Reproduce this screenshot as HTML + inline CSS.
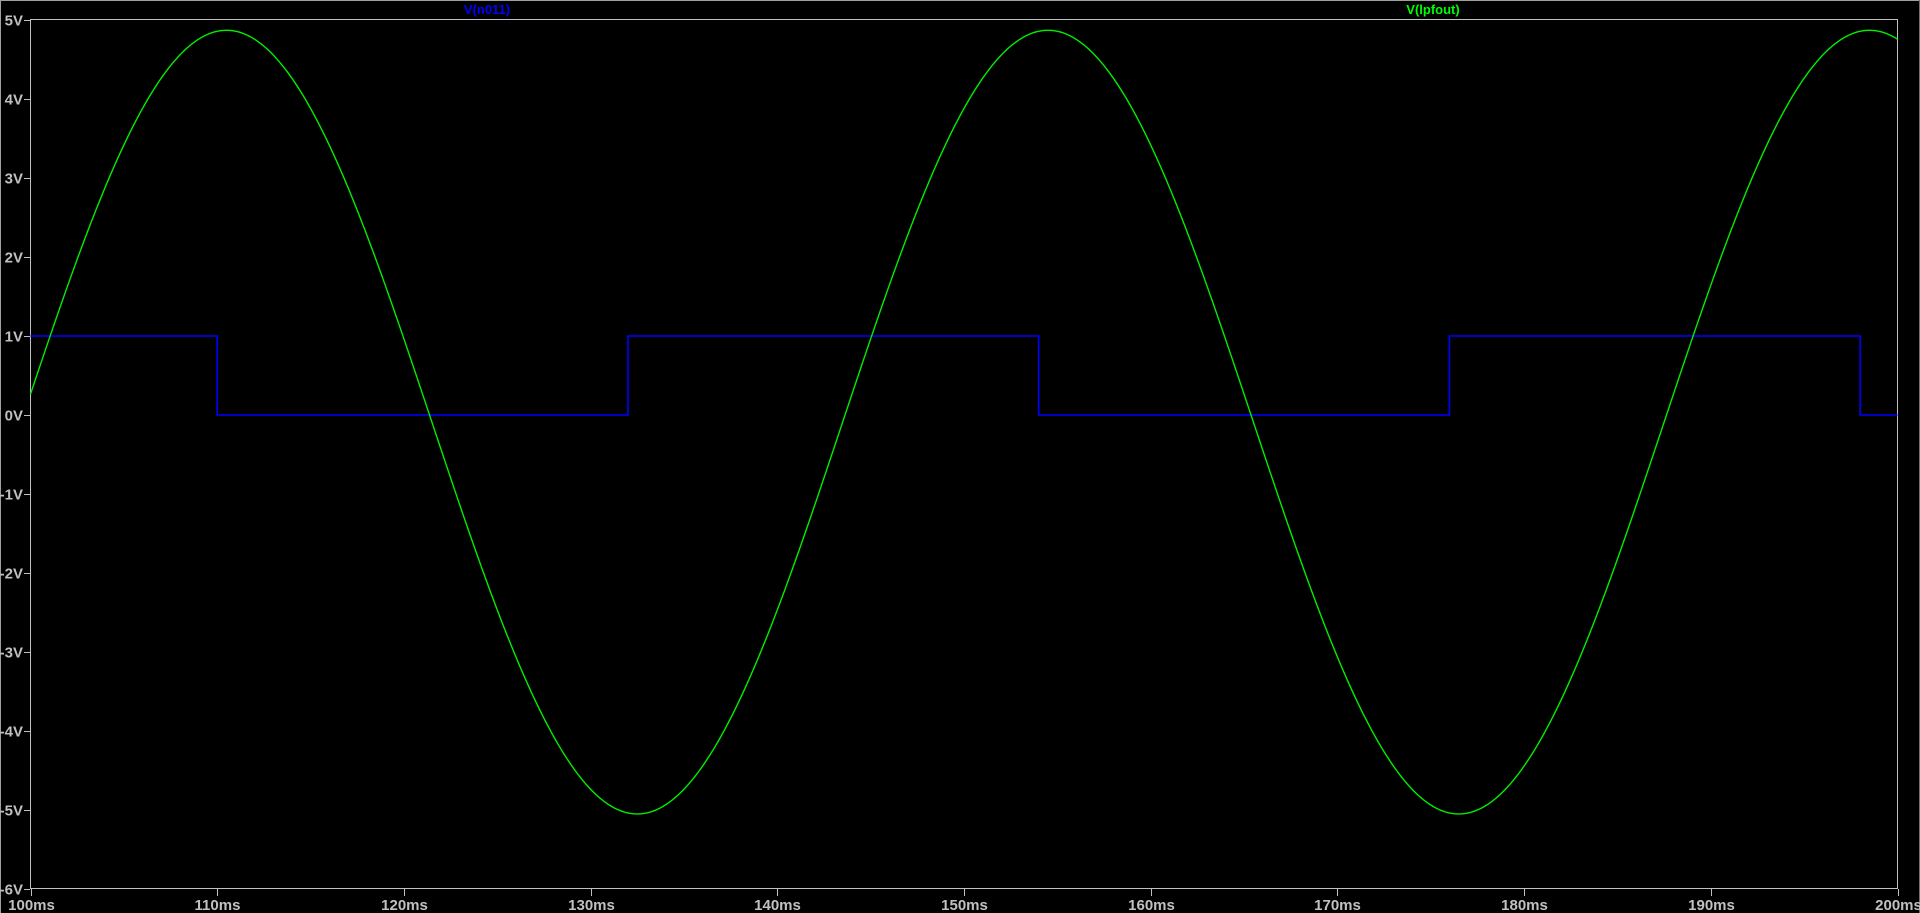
<!DOCTYPE html>
<html><head><meta charset="utf-8"><style>
html,body{margin:0;padding:0;background:#000;width:1920px;height:913px;overflow:hidden}
svg{display:block}
text{font-family:"Liberation Sans",Arial,sans-serif;font-weight:bold}
</style></head><body>
<svg id="s" width="1920" height="913" viewBox="0 0 1920 913">
<rect x="0" y="0" width="1920" height="913" fill="#000"/>
<line x1="0" y1="0.5" x2="1920" y2="0.5" stroke="#a0a0a0"/>
<line x1="0.5" y1="0" x2="0.5" y2="913" stroke="#a0a0a0"/>
<line x1="1919.5" y1="0" x2="1919.5" y2="913" stroke="#707070"/>
<rect x="30.5" y="19.5" width="1867" height="869" fill="none" stroke="#c0c0c0" stroke-width="1"/>
<g id="ticks" stroke="#c0c0c0"></g>
<g id="lbl" fill="#c0c0c0" font-size="15"></g>
<text x="487" y="14" fill="#0000ff" font-size="13" text-anchor="middle">V(n011)</text>
<text x="1433" y="14" fill="#00ff00" font-size="13" text-anchor="middle">V(lpfout)</text>
<path id="sq" fill="none" stroke="#0000ff" stroke-width="1.6"/>
<path id="sn" fill="none" stroke="#00ee00" stroke-width="1.4"/>
</svg>
<script>
var X=function(t){return 30.5+(t-100)*18.67;};
var Y=function(v){return 20+(5-v)*79;};
var ns="http://www.w3.org/2000/svg";
var tk=document.getElementById('ticks'),lb=document.getElementById('lbl');
for(var v=5;v>=-6;v--){var y=Y(v)+0.5;
var l=document.createElementNS(ns,'line');l.setAttribute('x1',24);l.setAttribute('x2',30);l.setAttribute('y1',y);l.setAttribute('y2',y);tk.appendChild(l);
var t=document.createElementNS(ns,'text');t.setAttribute('x',23);t.setAttribute('y',y+5);t.setAttribute('text-anchor','end');t.textContent=v+'V';lb.appendChild(t);}
for(var m=100;m<=200;m+=10){var x=Math.round(X(m))+0.5;
var l=document.createElementNS(ns,'line');l.setAttribute('x1',x);l.setAttribute('x2',x);l.setAttribute('y1',889);l.setAttribute('y2',896);tk.appendChild(l);
var t=document.createElementNS(ns,'text');t.setAttribute('x',x);t.setAttribute('y',910);t.setAttribute('text-anchor','middle');t.textContent=m+'ms';lb.appendChild(t);}
var d='M'+X(100)+' '+Y(1);
var e=[110,132,154,176,198],lv=1;
for(var i=0;i<e.length;i++){d+=' L'+X(e[i])+' '+Y(lv);lv=1-lv;d+=' L'+X(e[i])+' '+Y(lv);}
d+=' L'+X(200)+' '+Y(lv);
document.getElementById('sq').setAttribute('d',d);
var p='';
for(var t=100;t<=200.001;t+=0.1){var v=-0.09+4.96*Math.cos(2*Math.PI*(t-110.5)/44);p+=(p?' L':'M')+X(t).toFixed(2)+' '+Y(v).toFixed(2);}
document.getElementById('sn').setAttribute('d',p);
</script>
</body></html>
